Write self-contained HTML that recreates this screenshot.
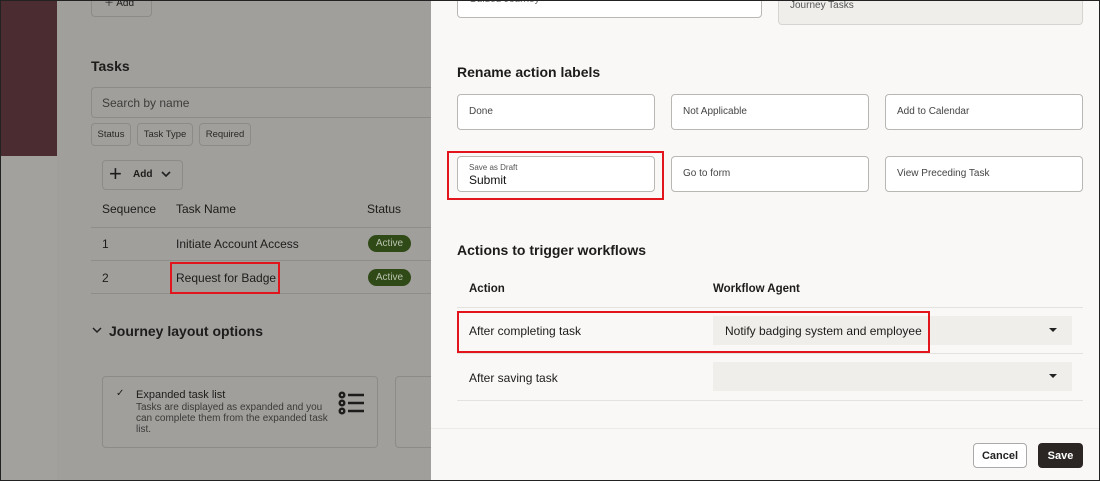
<!DOCTYPE html>
<html><head><meta charset="utf-8"><style>
*{box-sizing:border-box;margin:0;padding:0}
body{width:1100px;height:481px;overflow:hidden;font-family:"Liberation Sans",sans-serif;position:relative;background:#a09e9b}
.a{position:absolute}
.frame{position:absolute;left:0;top:0;width:1100px;height:481px;border:1px solid #222;pointer-events:none;z-index:10}
.strip1{left:0;top:0;width:57px;height:156px;background:#4b2d31}
.strip2{left:0;top:156px;width:57px;height:325px;background:#a3a19e}
.main{left:57px;top:0;width:374px;height:481px;background:#a19f9c}
.t{color:#1e1c1a;font-size:12px;white-space:nowrap}
.box{position:absolute;border:1px solid #8d8b88;border-radius:4px}
.chip{position:absolute;top:123px;height:23px;border:1px solid #8d8b88;border-radius:4px;font-size:9.5px;color:#2a2826;padding:0 4px;line-height:21px;white-space:nowrap;text-align:center}
.act{position:absolute;left:368px;width:43px;height:17px;border-radius:9px;background:#2f4a17;color:#b9c2ae;font-size:10px;text-align:center;line-height:17px}
.right{left:431px;top:0;width:669px;height:481px;background:#f9f8f6}
.fld{position:absolute;width:198px;height:36px;background:#fff;border:1px solid #b9b7b3;border-radius:4px;font-size:10px;color:#444;padding:0 11px;line-height:34px;white-space:nowrap}
.red{position:absolute;border:2px solid #e3151c}
.sel{position:absolute;left:713px;width:359px;height:29px;background:#efeeeb}
.caret{position:absolute;right:15px;top:12px;width:0;height:0;border-left:4px solid transparent;border-right:4px solid transparent;border-top:4px solid #222}
</style></head><body>
<div class="a strip1"></div><div class="a strip2"></div>
<div class="a main"></div>
<div class="box" style="left:91px;top:-5px;width:61px;height:22px"></div>
<div class="a t" style="left:104px;top:-6px;font-size:10px">＋ Add</div>
<div class="a t" style="left:91px;top:58px;font-size:14px;font-weight:bold">Tasks</div>
<div class="box" style="left:91px;top:87px;width:345px;height:31px;border-right:none;border-radius:4px 0 0 4px"></div>
<div class="a t" style="left:102px;top:96px;color:#3e3c3a">Search by name</div>
<div class="chip" style="left:91px;width:40px">Status</div>
<div class="chip" style="left:137px;width:56px">Task Type</div>
<div class="chip" style="left:199px;width:52px">Required</div>
<div class="box" style="left:102px;top:160px;width:81px;height:30px"></div>
<div class="a t" style="left:109px;top:161px;font-size:22px;font-weight:300">+</div>
<div class="a t" style="left:133px;top:169px;font-size:10px;font-weight:bold">Add</div>
<svg class="a" style="left:161px;top:171px" width="10" height="7"><path d="M1 1 L5 5 L9 1" stroke="#222" stroke-width="1.6" fill="none"/></svg>
<div class="a t" style="left:102px;top:202px">Sequence</div>
<div class="a t" style="left:176px;top:202px">Task Name</div>
<div class="a t" style="left:367px;top:202px">Status</div>
<div class="a" style="left:91px;top:227px;width:340px;height:1px;background:#8f8d8a"></div>
<div class="a t" style="left:102px;top:237px">1</div>
<div class="a t" style="left:176px;top:237px">Initiate Account Access</div>
<div class="act" style="top:235px">Active</div>
<div class="a" style="left:91px;top:260px;width:340px;height:1px;background:#8f8d8a"></div>
<div class="a t" style="left:102px;top:271px">2</div>
<div class="a t" style="left:176px;top:271px">Request for Badge</div>
<div class="act" style="top:269px">Active</div>
<div class="a" style="left:91px;top:293px;width:340px;height:1px;background:#8f8d8a"></div>
<div class="red" style="left:170px;top:262px;width:110px;height:32px"></div>
<svg class="a" style="left:92px;top:327px" width="10" height="7"><path d="M1 1 L5 5 L9 1" stroke="#222" stroke-width="1.5" fill="none"/></svg>
<div class="a t" style="left:109px;top:323px;font-size:14px;font-weight:bold">Journey layout options</div>
<div class="box" style="left:102px;top:376px;width:276px;height:72px"></div>
<div class="box" style="left:395px;top:376px;width:50px;height:72px"></div>
<div class="a t" style="left:116px;top:388px;font-size:10px">✓</div>
<div class="a t" style="left:136px;top:389px;font-size:11px">Expanded task list</div>
<div class="a" style="left:136px;top:402px;width:200px;font-size:10px;line-height:11px;color:#3c3a38">Tasks are displayed as expanded and you can complete them from the expanded task list.</div>
<svg class="a" style="left:338px;top:391px" width="28" height="26"><g stroke="#1e1c1a" stroke-width="2.4" fill="none"><circle cx="4" cy="4" r="2.3"/><circle cx="4" cy="12" r="2.3"/><circle cx="4" cy="20" r="2.3"/><path d="M10 4H26M10 12H26M10 20H26"/></g></svg>

<div class="a right"></div>
<div class="a" style="left:457px;top:-5px;width:305px;height:23px;background:#fff;border:1px solid #b9b7b3;border-radius:4px"></div>
<div class="a t" style="left:469px;top:-6px;font-size:10px;color:#666">Guided Journey</div>
<div class="a" style="left:778px;top:-5px;width:305px;height:30px;background:#efeeeb;border:1px solid #d6d4d0;border-radius:4px"></div>
<div class="a t" style="left:790px;top:0px;font-size:10px;color:#555">Journey Tasks</div>
<div class="a t" style="left:457px;top:64px;font-size:14px;font-weight:bold">Rename action labels</div>
<div class="fld" style="left:457px;top:94px">Done</div>
<div class="fld" style="left:671px;top:94px">Not Applicable</div>
<div class="fld" style="left:885px;top:94px">Add to Calendar</div>
<div class="fld" style="left:457px;top:156px;padding:6px 11px;line-height:normal"><div style="font-size:8px;color:#555">Save as Draft</div><div style="font-size:12px;color:#111;margin-top:1px">Submit</div></div>
<div class="fld" style="left:671px;top:156px">Go to form</div>
<div class="fld" style="left:885px;top:156px">View Preceding Task</div>
<div class="red" style="left:447px;top:151px;width:217px;height:49px"></div>
<div class="a t" style="left:457px;top:242px;font-size:14px;font-weight:bold">Actions to trigger workflows</div>
<div class="a t" style="left:469px;top:283px;font-weight:bold;font-size:11.5px">Action</div>
<div class="a t" style="left:713px;top:283px;font-weight:bold;font-size:11.5px">Workflow Agent</div>
<div class="a" style="left:457px;top:307px;width:626px;height:1px;background:#e4e2de"></div>
<div class="sel" style="top:316px"><div class="caret"></div></div>
<div class="a t" style="left:469px;top:324px">After completing task</div>
<div class="a t" style="left:725px;top:324px">Notify badging system and employee</div>
<div class="a" style="left:457px;top:353px;width:626px;height:1px;background:#e4e2de"></div>
<div class="red" style="left:457px;top:311px;width:473px;height:42px"></div>
<div class="sel" style="top:362px"><div class="caret"></div></div>
<div class="a t" style="left:469px;top:371px">After saving task</div>
<div class="a" style="left:457px;top:400px;width:626px;height:1px;background:#e4e2de"></div>
<div class="a" style="left:431px;top:428px;width:669px;height:1px;background:#eceae6"></div>
<div class="a" style="left:973px;top:443px;width:54px;height:25px;background:#fff;border:1px solid #aaa;border-radius:4px;font-size:11px;font-weight:bold;text-align:center;line-height:23px;color:#222;padding-top:1px">Cancel</div>
<div class="a" style="left:1038px;top:443px;width:45px;height:25px;background:#2b2624;border-radius:4px;font-size:11px;font-weight:bold;text-align:center;line-height:25px;color:#fff;padding-top:1px">Save</div>
<div class="frame"></div>
</body></html>
